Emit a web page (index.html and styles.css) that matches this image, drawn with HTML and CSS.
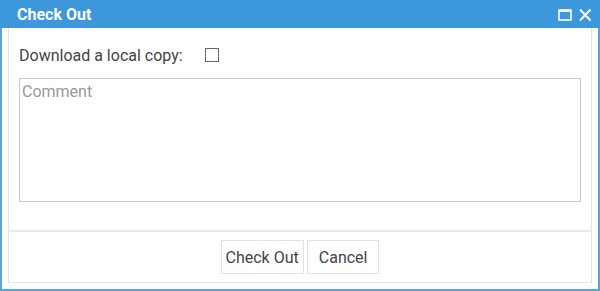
FILE: index.html
```html
<!DOCTYPE html>
<html lang="en">
<head>
    <meta charset="UTF-8">
    <title>Check Out</title>
    <link rel="stylesheet" href="styles.css">
</head>
<body>
    <div class="window">
        <div class="window-title">
            <span class="title-text">Check Out</span>
            <div class="title-buttons">
                <svg width="14" height="14" viewBox="0 0 14 14"><rect x="1" y="2" width="12" height="10" fill="none" stroke="#fff" stroke-width="1.6"/><line x1="1" y1="3.2" x2="13" y2="3.2" stroke="#fff" stroke-width="1.5"/></svg>
                <svg width="14" height="14" viewBox="0 0 14 14"><path d="M2 1.5 L12.5 12.5 M12.5 1.5 L2 12.5" stroke="#fff" stroke-width="2" fill="none"/></svg>
            </div>
        </div>
        <div class="window-body">
            <div class="panel">
                <div class="panel-content">
                    <label class="field-row">
                        <span>Download a local copy:</span>
                        <span class="checkbox"></span>
                    </label>
                    <textarea class="comment" placeholder="Comment"></textarea>
                </div>
                <div class="panel-footer">
                    <button class="btn">Check Out</button>
                    <button class="btn">Cancel</button>
                </div>
            </div>
        </div>
    </div>
</body>
</html>
```

FILE: styles.css
```css
/* base */
body {
    margin: 0;
    font-family: Roboto, "Liberation Sans", sans-serif;
    font-size: 16px;
    color: #444;
    background: #fff;
}

/* window frame */
.window {
    width: 600px;
    height: 291px;
    box-sizing: border-box;
    border: 2px solid #5ba3e0;
    border-top: none;
    display: flex;
    flex-direction: column;
}

.window-title {
    height: 28px;
    background-color: #3c97db;
    display: flex;
    align-items: center;
    justify-content: space-between;
    padding: 0 8px 0 17px;
    margin: 0 -2px;
    color: #fff;
}

.title-text {
    font-weight: bold;
    font-size: 16px;
}

.title-buttons {
    display: flex;
    gap: 6px;
    margin-top: 1px;
}

.window-body {
    flex: 1;
    padding: 0 6px 6px 6px;
    display: flex;
}

/* inner panel */
.panel {
    flex: 1;
    border: 1px solid #e3e3e3;
    border-top: none;
    display: flex;
    flex-direction: column;
}

.panel-content {
    padding: 14px 10px 0 10px;
    height: 204px;
    box-sizing: border-box;
    border-bottom: 2px solid #e8e8e8;
}

.field-row {
    display: flex;
    align-items: center;
    height: 26px;
    gap: 22px;
    color: #444;
}

.checkbox {
    width: 12px;
    height: 12px;
    border: 1px solid #666;
}

.comment {
    display: block;
    margin-top: 10px;
    width: 562px;
    height: 124px;
    box-sizing: border-box;
    border: 1px solid #c8c8c8;
    padding: 3px 2px;
    font-family: Roboto, "Liberation Sans", sans-serif;
    font-size: 16px;
    resize: none;
}

.comment::placeholder {
    color: #999;
}

.panel-footer {
    flex: 1;
    display: flex;
    justify-content: center;
    align-items: center;
    gap: 3px;
}

.btn {
    height: 34px;
    padding: 0 4px;
    background: #fff;
    border: 1px solid #e2e2e2;
    font-family: Roboto, "Liberation Sans", sans-serif;
    font-size: 16px;
    color: #444;
}

.btn + .btn {
    padding: 0 11px;
}
```
